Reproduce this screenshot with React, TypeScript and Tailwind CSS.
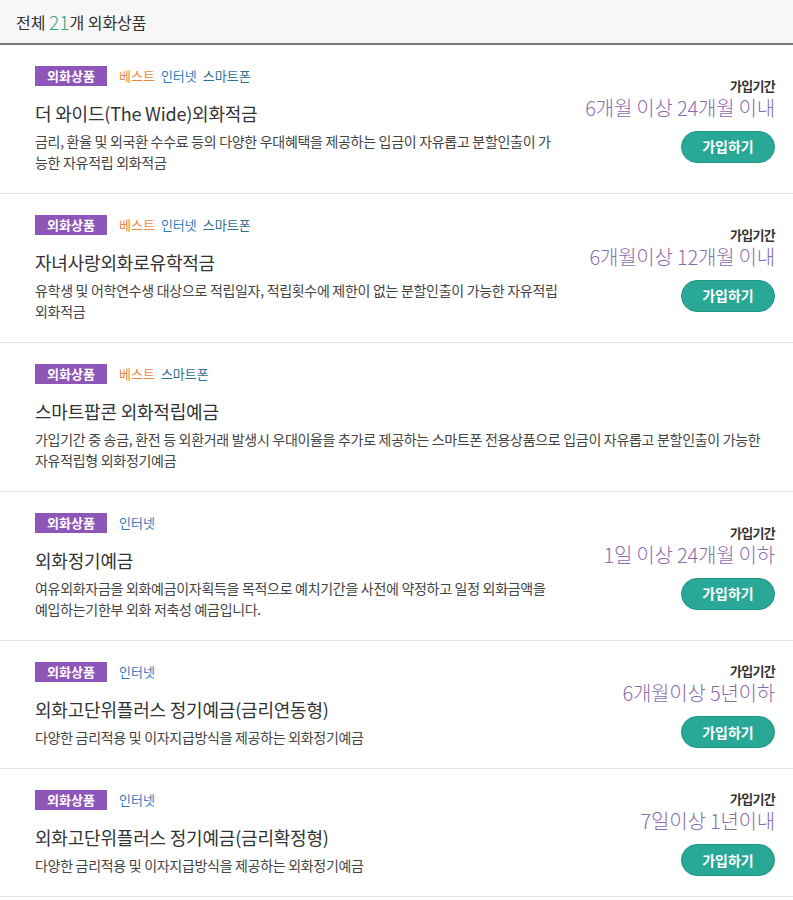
import React from 'react';

type Tag = 'best' | 'net' | 'phone';

type Product = {
  tags: Tag[];
  title: string;
  desc: string[];
  period?: string;
};

// description lines are split where the original page wraps them
const products: Product[] = [
  {
    tags: ['best', 'net', 'phone'],
    title: '더 와이드(The Wide)외화적금',
    desc: [
      '금리, 환율 및 외국환 수수료 등의 다양한 우대혜택을 제공하는 입금이 자유롭고 분할인출이 가',
      '능한 자유적립 외화적금',
    ],
    period: '6개월 이상 24개월 이내',
  },
  {
    tags: ['best', 'net', 'phone'],
    title: '자녀사랑외화로유학적금',
    desc: ['유학생 및 어학연수생 대상으로 적립일자, 적립횟수에 제한이 없는 분할인출이 가능한 자유적립', '외화적금'],
    period: '6개월이상 12개월 이내',
  },
  {
    tags: ['best', 'phone'],
    title: '스마트팝콘 외화적립예금',
    desc: [
      '가입기간 중 송금, 환전 등 외환거래 발생시 우대이율을 추가로 제공하는 스마트폰 전용상품으로 입금이 자유롭고 분할인출이 가능한',
      '자유적립형 외화정기예금',
    ],
  },
  {
    tags: ['net'],
    title: '외화정기예금',
    desc: [
      '여유외화자금을 외화예금이자획득을 목적으로 예치기간을 사전에 약정하고 일정 외화금액을',
      '예입하는기한부 외화 저축성 예금입니다.',
    ],
    period: '1일 이상 24개월 이하',
  },
  {
    tags: ['net'],
    title: '외화고단위플러스 정기예금(금리연동형)',
    desc: ['다양한 금리적용 및 이자지급방식을 제공하는 외화정기예금'],
    period: '6개월이상 5년이하',
  },
  {
    tags: ['net'],
    title: '외화고단위플러스 정기예금(금리확정형)',
    desc: ['다양한 금리적용 및 이자지급방식을 제공하는 외화정기예금'],
    period: '7일이상 1년이내',
  },
];

const tagLabel: Record<Tag, string> = { best: '베스트', net: '인터넷', phone: '스마트폰' };
const tagColor: Record<Tag, string> = {
  best: 'text-[#e88a3f]',
  net: 'text-[#2f7bbd]',
  phone: 'text-[#2f6f90]',
};

const ProductRow: React.FC<{ p: Product }> = ({ p }) => (
  <li className="flex items-center border-b border-[#e3e3e3] pl-[35px] pr-[18px] pt-[21px] pb-[20px]">
    <div className="min-w-0 flex-1">
      <div className="flex items-center gap-[12px]">
        <span className="inline-flex h-[20px] w-[72px] items-center justify-center bg-[#8e56b9] text-[13px] font-bold text-white">
          외화상품
        </span>
        <span className="flex gap-[6px] text-[13px]">
          {p.tags.map((t) => (
            <span key={t} className={tagColor[t]}>
              {tagLabel[t]}
            </span>
          ))}
        </span>
      </div>
      <h3 className="mt-[14px] text-[18px] leading-[26px] tracking-[-0.2px] text-[#333]">{p.title}</h3>
      <p className="mt-[5px] text-[14px] leading-[21px] tracking-[-0.3px] text-[#444]">
        {p.desc.map((line) => (
          <span key={line} className="block whitespace-nowrap">
            {line}
          </span>
        ))}
      </p>
    </div>
    {p.period && (
      <div className="ml-4 flex shrink-0 flex-col items-end">
        <span className="text-[13px] font-bold leading-[18px] tracking-[-0.7px] text-[#333]">가입기간</span>
        <span className="text-[20px] font-light leading-[26px] tracking-[-0.2px] text-[#8a6cae]">{p.period}</span>
        <button className="mt-[10px] flex h-[32px] w-[94px] items-center justify-center rounded-full border border-[#1f9585] bg-[#29a897] text-[14px] font-bold text-white">
          가입하기
        </button>
      </div>
    )}
  </li>
);

export default function App() {
  return (
    <div className="w-[793px] bg-white font-['Noto_Sans_CJK_KR','Noto_Sans',sans-serif]">
      <div className="flex h-[45px] items-center border-b-2 border-[#777] bg-[#f7f7f7] pl-[16px] text-[16px] text-[#333]">
        전체&nbsp;<span className="text-[19px] font-light leading-none text-[#3aa591]">21</span>개 외화상품
      </div>
      <ul>
        {products.map((p) => (
          <ProductRow key={p.title} p={p} />
        ))}
      </ul>
    </div>
  );
}
